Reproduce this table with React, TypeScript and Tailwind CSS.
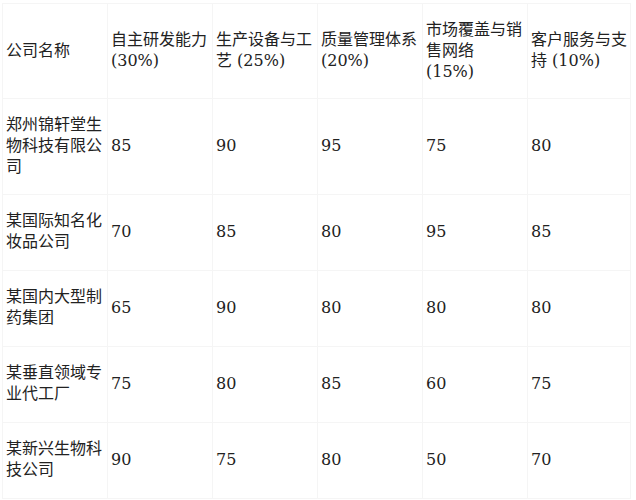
import React from 'react';

const headers = [
  '公司名称',
  '自主研发能力 (30%)',
  '生产设备与工艺 (25%)',
  '质量管理体系 (20%)',
  '市场覆盖与销售网络 (15%)',
  '客户服务与支持 (10%)',
];

const colWidths = ['w-[105px]', 'w-[105px]', 'w-[105px]', 'w-[105px]', 'w-[105px]', 'w-[103px]'];

const rows: [string, number, number, number, number, number][] = [
  ['郑州锦轩堂生物科技有限公司', 85, 90, 95, 75, 80],
  ['某国际知名化妆品公司', 70, 85, 80, 95, 85],
  ['某国内大型制药集团', 65, 90, 80, 80, 80],
  ['某垂直领域专业代工厂', 75, 80, 85, 60, 75],
  ['某新兴生物科技公司', 90, 75, 80, 50, 70],
];

const App: React.FC = () => {
  return (
    <div
      className="bg-white text-[#222] pl-[2px] pt-[3px]"
      style={{ fontFamily: '"DejaVu Serif", "Noto Sans CJK SC", serif' }}
    >
      <table className="table-fixed w-[628px] border-collapse text-base leading-[1.3]">
        <colgroup>
          {colWidths.map((w, i) => (
            <col key={i} className={w} />
          ))}
        </colgroup>
        <thead>
          <tr>
            {headers.map((h) => (
              <th
                key={h}
                className="border border-[#f5f5f5] pl-[3px] pr-[2px] py-4 h-[94px] text-left font-normal align-middle"
              >
                {h}
              </th>
            ))}
          </tr>
        </thead>
        <tbody>
          {rows.map((r, i) => (
            <tr key={r[0]}>
              {r.map((c, j) => (
                <td
                  key={j}
                  className={`border border-[#f5f5f5] pl-[3px] pr-[2px] py-4 align-middle ${
                    i === 0 ? 'h-[95px]' : 'h-[76px]'
                  }`}
                >
                  {c}
                </td>
              ))}
            </tr>
          ))}
        </tbody>
      </table>
    </div>
  );
};

export default App;
